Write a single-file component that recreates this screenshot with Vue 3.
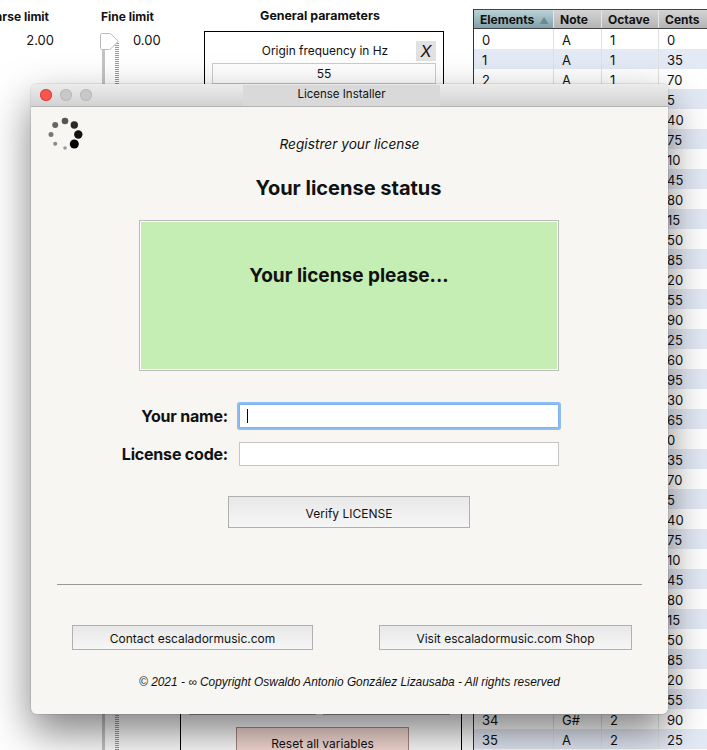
<script setup>
const names = ['A', 'A#', 'B', 'C', 'C#', 'D', 'D#', 'E', 'F', 'F#', 'G', 'G#']
const rows = Array.from({ length: 36 }, (_, n) => {
  const total = 35 * n
  const semi = Math.floor(total / 100)
  const covered = n > 2 && n < 34
  return {
    n,
    el: covered ? '' : n,
    note: covered ? '' : names[semi % 12],
    octave: covered ? '' : 1 + Math.floor((semi + 9) / 12),
    cents: total % 100
  }
})
const dots = [
  { x: 8.2, y: 2, r: 3, c: '#666' },
  { x: 4, y: 11.5, r: 2.5, c: '#777' },
  { x: 8.2, y: 20.7, r: 2, c: '#888' },
  { x: 18, y: 25, r: 1.8, c: '#999' },
  { x: 18, y: -2, r: 3.3, c: '#555' },
  { x: 27.3, y: 2, r: 3.7, c: '#2a2a2a' },
  { x: 31.3, y: 11.5, r: 4.2, c: '#111' },
  { x: 27.3, y: 21, r: 4.5, c: '#000' }
]
</script>

<template>
  <div class="app">
    <div class="background">
      <section class="coarse">
        <h3 class="limit-title">Coarse limit</h3>
        <div class="coarse-value">2.00</div>
      </section>

      <section class="fine">
        <h3 class="limit-title fine-title">Fine limit</h3>
        <div class="fine-body">
          <div class="slider">
            <div class="track"></div>
            <div class="ticks"></div>
            <svg class="thumb" width="21" height="20" viewBox="0 0 21 20">
              <path d="M3 1.500h7.500c.6 0 1 .2 1.400.5l6.600 6.500c.5.5.5 1 0 1.500l-7 7c-.4.3-.7.500-1.200.500H3c-1 0-1.500-.6-1.500-1.500V3c0-1 .5-1.500 1.500-1.500z" fill="#fff" stroke="#bbb" />
            </svg>
          </div>
          <div class="fine-value">0.00</div>
        </div>
      </section>

      <section class="general">
        <h3 class="general-title">General parameters</h3>
        <div class="param-box">
          <div class="param-head">
            <span class="param-label">Origin frequency in Hz</span>
            <span class="x-btn">X</span>
          </div>
          <div class="param-input">55</div>
        </div>
        <div class="outer-box">
          <div class="hidden-buttons">
            <div class="hidden-btn"></div>
            <div class="hidden-btn"></div>
          </div>
          <div class="reset-btn">Reset all variables</div>
        </div>
      </section>

      <section class="table">
        <div class="thead">
          <div class="th col-el active">Elements <span class="sort">▲</span></div>
          <div class="th col-note">Note</div>
          <div class="th col-oct">Octave</div>
          <div class="th col-cents">Cents</div>
        </div>
        <div v-for="r in rows" :key="r.n" class="tr" :class="{ alt: r.n % 2 === 1 }">
          <div class="td col-el">{{ r.el }}</div>
          <div class="td col-note">{{ r.note }}</div>
          <div class="td col-oct">{{ r.octave }}</div>
          <div class="td col-cents">{{ r.cents }}</div>
        </div>
      </section>
    </div>

    <div class="window">
      <header class="titlebar">
        <span class="light red"></span>
        <span class="light"></span>
        <span class="light"></span>
        <span class="title-tab">License Installer</span>
      </header>

      <div class="body">
        <svg class="spinner" width="40" height="36" viewBox="0 -6 40 36">
          <circle v-for="(d, i) in dots" :key="i" :cx="d.x" :cy="d.y" :r="d.r" :fill="d.c" />
        </svg>

        <p class="subtitle">Registrer your license</p>
        <h1 class="status-title">Your license status</h1>

        <div class="status-box">
          <p class="status-text">Your license please...</p>
        </div>

        <div class="form">
          <label class="form-label">Your name:</label>
          <div class="field focus"><span class="caret"></span></div>
          <label class="form-label">License code:</label>
          <div class="field"></div>
        </div>

        <div class="btn verify">Verify LICENSE</div>

        <div class="rule"></div>

        <div class="links">
          <div class="btn contact">Contact escaladormusic.com</div>
          <div class="btn shop">Visit escaladormusic.com Shop</div>
        </div>

        <p class="copyright">© 2021 - ∞ Copyright Oswaldo Antonio González Lizausaba - All rights reserved</p>
      </div>
    </div>
  </div>
</template>

<style scoped>
.app {
  position: relative;
  width: 707px;
  height: 750px;
  overflow: hidden;
  background: #fff;
  font-family: Inter, "Liberation Sans", sans-serif;
  color: #111;
}
.background {
  display: flex;
  height: 750px;
}
h1, h3, p { margin: 0; }

.coarse {
  flex: 0 0 60px;
  overflow: hidden;
  text-align: right;
}
.limit-title {
  font-size: 12px;
  font-weight: 700;
  line-height: 16px;
  margin-top: 9px;
  white-space: nowrap;
}
.coarse .limit-title {
  padding-right: 11px;
  direction: rtl;
}
.coarse-value {
  font-size: 13px;
  line-height: 16px;
  margin-top: 7px;
  padding-right: 6px;
}
.fine {
  flex: 0 0 80px;
  margin-left: 40px;
  display: flex;
  flex-direction: column;
  min-width: 0;
}
.fine-title { padding-left: 1px; }
.fine-body {
  display: flex;
  flex: 1;
}
.slider {
  position: relative;
  flex: 0 0 20px;
  height: 725px;
  margin-top: 7px;
}
.track {
  position: absolute;
  left: 2px;
  top: 10px;
  bottom: 0;
  width: 3px;
  background: #c4c4c4;
}
.ticks {
  position: absolute;
  left: 15px;
  top: 11px;
  bottom: 0;
  width: 4px;
  background: repeating-linear-gradient(to bottom, #999 0 1px, transparent 1px 2px);
}
.thumb {
  position: absolute;
  left: -1px;
  top: 0;
}
.fine-value {
  font-size: 13px;
  line-height: 16px;
  margin: 7px 0 0 13px;
}

.general {
  flex: 0 0 282px;
  display: flex;
  flex-direction: column;
}
.general-title {
  flex: none;
  font-size: 12.400px;
  font-weight: 700;
  line-height: 16px;
  margin-top: 8px;
  padding-right: 2px;
  text-align: center;
}
.param-box {
  flex: none;
  margin: 7px 18px 0 24px;
  height: 220px;
  border: 1px solid #000;
  padding: 9px 7px 0;
  box-sizing: border-box;
}
.param-head {
  position: relative;
  height: 20px;
  font-size: 11.900px;
  line-height: 20px;
  display: flex;
  justify-content: center;
  align-items: center;
}
.param-label { margin-left: 2px; }
.x-btn {
  position: absolute;
  right: 0;
  top: 0;
  width: 20px;
  height: 20px;
  background: #e2e2e2;
  font-style: italic;
  font-size: 16px;
  line-height: 20px;
  text-align: center;
}
.param-input {
  height: 21px;
  margin-top: 2px;
  border: 1px solid #ccc;
  box-sizing: border-box;
  font-size: 12px;
  line-height: 19px;
  text-align: center;
}
.outer-box {
  height: 510px;
  flex: none;
  border-left: 1px solid #000;
  border-right: 1px solid #000;
  display: flex;
  flex-direction: column;
  justify-content: flex-end;
  align-items: center;
  box-sizing: border-box;
}
.hidden-buttons {
  display: flex;
  gap: 7px;
  align-self: stretch;
  padding: 0 11px 0 8px;
}
.hidden-btn {
  flex: 1;
  height: 20px;
  border: 1px solid #aaa;
  box-sizing: border-box;
}
.reset-btn {
  flex: none;
  width: 173px;
  height: 34px;
  margin: 12px 0 0 3px;
  border: 1px solid #a88;
  box-sizing: border-box;
  background: #f8dcd6;
  font-size: 12px;
  line-height: 32px;
  text-align: center;
}

.table {
  flex: 0 0 234px;
  margin-left: 11px;
  margin-top: 9px;
  border-left: 1px solid #333;
  box-sizing: border-box;
  font-size: 13px;
}
.thead {
  display: flex;
  height: 20px;
  box-sizing: border-box;
  border-top: 1px solid #444;
  border-bottom: 1px solid #444;
  background: linear-gradient(#d4d4d4, #b4b4b4);
  font-size: 12px;
  font-weight: 700;
}
.th {
  line-height: 20px;
  border-right: 1px solid #e6e6e6;
  box-sizing: border-box;
  padding-left: 6px;
  white-space: nowrap;
}
.th.active {
  background: linear-gradient(#bed2d6, #7fa0aa);
}
.sort {
  font-size: 9px;
  color: #6d8890;
  margin-left: 2px;
}
.col-el { flex: 0 0 80px; }
.col-note { flex: 0 0 48px; }
.col-oct { flex: 0 0 57px; }
.col-cents { flex: 0 0 48px; border-right: 0; }
.tr {
  display: flex;
  height: 20px;
  background: #fff;
}
.tr.alt { background: #e3e9f5; }
.td {
  line-height: 22px;
  height: 20px;
  padding-left: 8px;
  box-sizing: border-box;
  border-right: 1px solid #e0e0e0;
}
.td.col-cents { border-right: 0; }

.window {
  position: absolute;
  left: 31px;
  top: 84px;
  width: 637px;
  height: 630px;
  border-radius: 6px;
  background: #f7f6f2;
  box-shadow: 0 0 0 1px rgba(0, 0, 0, 0.08), 0 18px 42px rgba(0, 0, 0, 0.5);
}
.titlebar {
  position: relative;
  display: flex;
  align-items: center;
  gap: 8px;
  height: 23px;
  padding-left: 9px;
  box-sizing: border-box;
  border-bottom: 1px solid #b4b4b4;
  border-radius: 6px 6px 0 0;
  background: linear-gradient(#ececec, #d2d2d2);
}
.light {
  width: 12px;
  height: 12px;
  border-radius: 50%;
  background: #c8c8c8;
  box-shadow: inset 0 0 0 1px #b8b8b8;
}
.light.red {
  background: #f8554e;
  box-shadow: inset 0 0 0 1px #e0443e;
}
.title-tab {
  position: absolute;
  left: 212px;
  top: 1px;
  width: 197px;
  height: 21px;
  background: #d9d9d9;
  font-size: 11.500px;
  line-height: 19px;
  text-align: center;
}
.body {
  position: relative;
  display: flex;
  flex-direction: column;
  align-items: center;
}
.spinner {
  position: absolute;
  left: 16px;
  top: 10px;
}
.subtitle {
  margin-top: 28px;
  font-size: 13.700px;
  font-style: italic;
  line-height: 18px;
}
.status-title {
  margin: 22px 0 0 -2px;
  font-size: 20px;
  font-weight: 700;
  line-height: 26px;
}
.status-box {
  width: 420px;
  height: 151px;
  margin: 19px 0 0 -1px;
  box-sizing: border-box;
  border: 1px solid #bbb;
  outline: 1px solid #fff;
  outline-offset: -2px;
  background: #c5eeb5;
  text-align: center;
}
.status-text {
  margin-top: 43px;
  font-size: 19px;
  font-weight: 700;
  line-height: 24px;
}
.form {
  display: grid;
  grid-template-columns: 197px 320px;
  column-gap: 11px;
  row-gap: 14px;
  align-items: center;
  align-self: flex-start;
  margin-top: 33px;
}
.form-label {
  font-size: 16px;
  font-weight: 700;
  text-align: right;
  letter-spacing: -0.2px;
}
.field {
  height: 24px;
  box-sizing: border-box;
  border: 1px solid #c4c4c0;
  background: #fff;
  display: flex;
  align-items: center;
  padding-left: 7px;
}
.field.focus {
  border-color: #7fb2ea;
  box-shadow: 0 0 0 2px #8fbdf0;
  border-radius: 1px;
}
.caret {
  width: 1px;
  height: 14px;
  background: #000;
}
.btn {
  box-sizing: border-box;
  border: 1px solid #b0b0b0;
  background: linear-gradient(#e8e8e8, #f6f6f6);
  font-size: 12px;
  text-align: center;
}
.verify {
  width: 242px;
  height: 32px;
  margin: 30px 0 0 -1px;
  line-height: 34px;
}
.rule {
  width: 585px;
  height: 1px;
  margin-top: 56px;
  background: #999;
}
.links {
  display: flex;
  align-self: flex-start;
  margin: 40px 0 0 41px;
  gap: 66px;
}
.links .btn {
  height: 25px;
  line-height: 25px;
}
.contact { width: 241px; }
.shop { width: 253px; }
.copyright {
  margin-top: 25px;
  font-family: "Liberation Sans", sans-serif;
  font-size: 11.900px;
  font-style: italic;
  line-height: 14px;
}
</style>
